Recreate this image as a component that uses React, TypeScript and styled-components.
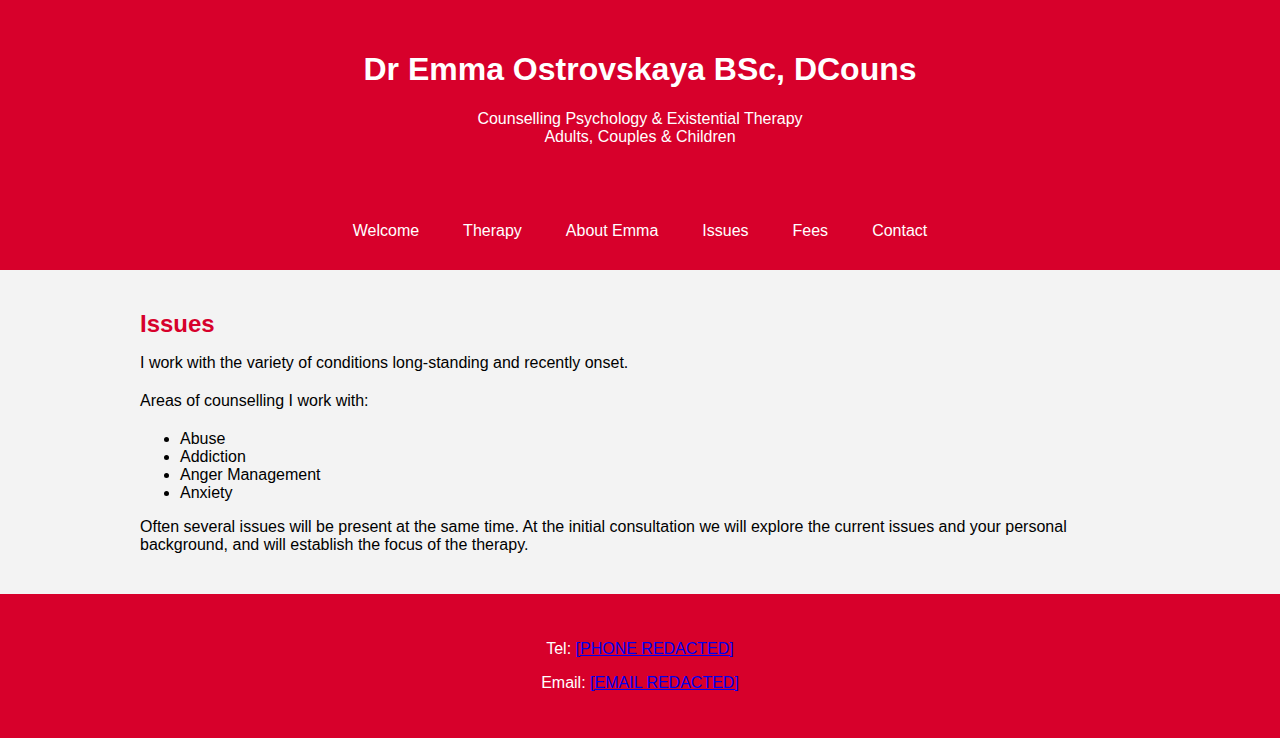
import React from "react";
import styled, { createGlobalStyle } from "styled-components";

const RED = "#d7002b";

const GlobalStyle = createGlobalStyle`
  html, body {
    margin: 0;
    padding: 0;
    background: #f3f3f3;
    font-family: "Liberation Sans", Arial, sans-serif;
    font-size: 16px;
    line-height: 18px;
    color: #000;
  }
`;

const Header = styled.header`
  background: ${RED};
  color: #fff;
  text-align: center;
  padding: 51px 0 14px;
`;

const Title = styled.h1`
  margin: 0;
  font-size: 32px;
  line-height: 37px;
  font-weight: bold;
`;

const Subtitle = styled.p`
  margin: 22px 0 0;
  font-size: 16px;
  line-height: 18px;
`;

const Nav = styled.nav`
  display: flex;
  justify-content: center;
  margin-top: 60px;
`;

const NavLink = styled.a`
  color: #fff;
  text-decoration: none;
  padding: 16px 22px;
  font-size: 16px;
  line-height: 18px;
`;

const Main = styled.main`
  background: #f3f3f3;
  padding: 40px 0;
`;

const Content = styled.div`
  max-width: 1000px;
  margin: 0 auto;
`;

const Heading = styled.h2`
  margin: 0 0 16px;
  color: ${RED};
  font-size: 24px;
  line-height: 28px;
  font-weight: bold;
`;

const Para = styled.p`
  margin: 0 0 20px;
  &:last-child {
    margin-bottom: 0;
  }
`;

const List = styled.ul`
  margin: 0 0 16px;
  padding-left: 40px;
`;

const Footer = styled.footer`
  background: ${RED};
  color: #fff;
  text-align: center;
  padding: 30px 0;
`;

const FooterLine = styled.p`
  margin: 16px 0;
`;

const FooterLink = styled.a`
  color: #0000ee;
  text-decoration: underline;
`;

const navItems = ["Welcome", "Therapy", "About Emma", "Issues", "Fees", "Contact"];
const issues = ["Abuse", "Addiction", "Anger Management", "Anxiety"];

export default function App() {
  return (
    <>
      <GlobalStyle />
      <Header>
        <Title>Dr Emma Ostrovskaya BSc, DCouns</Title>
        <Subtitle>
          Counselling Psychology &amp; Existential Therapy
          <br />
          Adults, Couples &amp; Children
        </Subtitle>
        <Nav>
          {navItems.map((item) => (
            <NavLink key={item} href="#">
              {item}
            </NavLink>
          ))}
        </Nav>
      </Header>
      <Main>
        <Content>
          <Heading>Issues</Heading>
          <Para>I work with the variety of conditions long-standing and recently onset.</Para>
          <Para>Areas of counselling I work with:</Para>
          <List>
            {issues.map((i) => (
              <li key={i}>{i}</li>
            ))}
          </List>
          <Para>
            Often several issues will be present at the same time. At the initial consultation we will explore the
            current issues and your personal background, and will establish the focus of the therapy.
          </Para>
        </Content>
      </Main>
      <Footer>
        <FooterLine>
          Tel: <FooterLink href="#">[PHONE REDACTED]</FooterLink>
        </FooterLine>
        <FooterLine>
          Email: <FooterLink href="#">[EMAIL REDACTED]</FooterLink>
        </FooterLine>
      </Footer>
    </>
  );
}
